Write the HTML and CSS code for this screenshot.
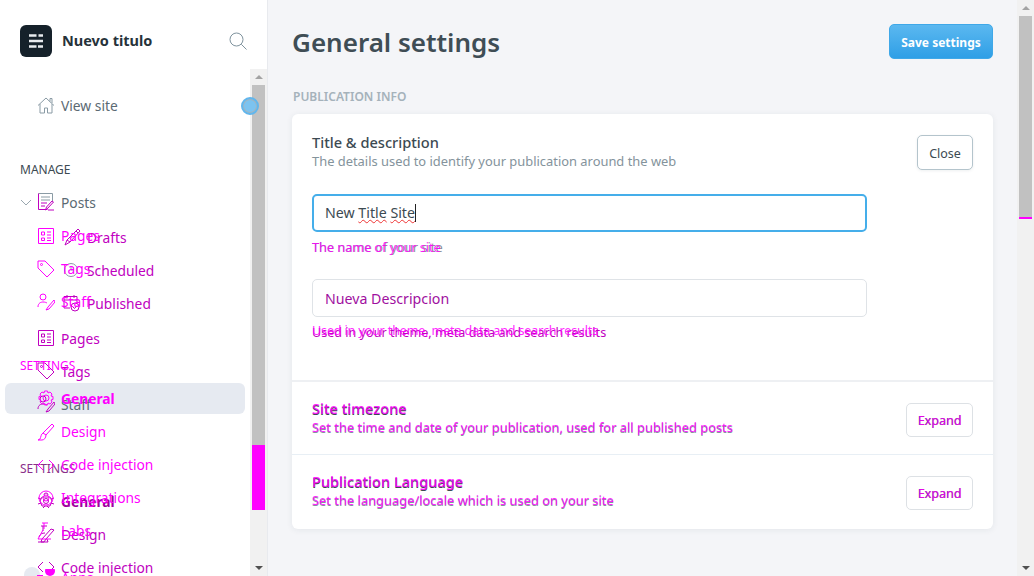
FILE: index.html
```html
<!doctype html>
<html lang="en">
<head>
<title>General settings</title>
<link rel="stylesheet" href="styles.css">
</head>
<body>
<div class="app">
  <aside class="sidebar">
    <div class="brand">
      <div class="logo">
        <svg width="14" height="14" viewBox="0 0 14 14"><path d="M0 1.500h7.500M9.500 1.500H14M0 7h14M0 12.500h7.500M9 12.500h5" stroke="#e8ebee" stroke-width="2.400" fill="none"/></svg>
      </div>
      <span class="brand-name">Nuevo titulo</span>
      <svg class="search" width="18" height="18" viewBox="0 0 18 18" fill="none" stroke="#7f939e" stroke-width="1"><circle cx="7.500" cy="7.500" r="6.500"/><path d="M12.300 12.300l5.200 5.200"/></svg>
    </div>
    <div class="nav-wrap">
      <nav class="nav">
        <a class="item view"><svg class="ico" viewBox="0 0 18 18"><path d="M1 9.500L9 2l8 7.500M13 5.500V2.500h2V7M3 8v9h4.500v-5h3v5H15V8"/></svg>View site</a>
        <div class="heading manage">MANAGE</div>
        <a class="item posts"><svg class="chev" width="12" height="7" viewBox="0 0 12 7"><path d="M1 1l5 5 5-5" fill="none" stroke="#9aa7af"/></svg><svg class="ico" viewBox="0 0 18 18"><path d="M1.500 .5h14v8M4 4h9M4 7h9"/><path class="hot-line" d="M1.500 .5v16h9M4 10h6M4 13h4M16.500 9l-5.500 6-2.500 2 1-3 5.500-6zM11 17h6"/></svg>Posts</a>
        <a class="sub"><svg class="ico hot" viewBox="0 0 18 18"><path d="M15 1l2 2-10 11-5 3 2-5zM4 12l3 2M13 3l2 2"/></svg>Drafts</a>
        <a class="sub"><svg class="ico" viewBox="0 0 18 18"><circle cx="8" cy="9" r="6.500"/><path d="M8 5v4h3"/></svg>Scheduled</a>
        <a class="sub"><svg class="ico hot" viewBox="0 0 18 18"><path d="M1 2.500h13v6M1 2.500V14h6M1 6h13M4 1v3M11 1v3"/><circle cx="12" cy="13" r="4"/><path d="M10 13l1.500 1.500 2.500-3"/></svg>Published</a>
        <a class="item low"><svg class="ico hot" viewBox="0 0 18 18"><path d="M1.500 1.500h15v15h-15zM4.500 5h3v3h-3zM4.500 11h3v2.500h-3zM10 5h4M10 8h4M10 11h4M10 13.500h4"/></svg>Pages</a>
        <a class="item low"><svg class="ico hot" viewBox="0 0 18 18"><path d="M1 1h7l9 9-7 7-9-9z"/><circle cx="4.500" cy="4.500" r="1"/></svg>Tags</a>
        <a class="item low staff"><svg class="ico hot" viewBox="0 0 18 18"><circle cx="6" cy="4" r="3"/><path d="M1 14c0-4 3-5 5-5s3 .5 4 1M17 7l-6 7-2 3 3-1 6-7z"/></svg>Staff</a>
        <div class="heading second">SETTINGS</div>
        <a class="item low"><svg class="ico hot" viewBox="0 0 18 18"><path d="M7 3a2 2 0 0 1 4 0M5 5h8l2 4-2 5H5L3 9zM1 6l3 1M17 6l-3 1M1 12l3-1M17 12l-3-1M6 16l2-2M12 16l-2-2"/><circle cx="9" cy="9" r="2.500"/></svg><b>General</b></a>
        <a class="item low"><svg class="ico hot" viewBox="0 0 18 18"><path d="M4 1h6M6 1v5M1 17h10l-1-3M17 5l-8 9-2 3-3 0 1-3 9-10zM2 12c1-3 3-4 6-4"/></svg>Design</a>
        <a class="item low"><svg class="ico hot" viewBox="0 0 18 18"><path d="M6 4L1 9l5 5M12 4l5 5-5 5"/></svg>Code injection</a>
      </nav>
      <div class="ghost-nav">
        <a class="ghost-item"><svg class="ico" viewBox="0 0 18 18"><path d="M1.500 1.500h15v15h-15zM4.500 5h3v3h-3zM4.500 11h3v2.500h-3zM10 5h4M10 8h4M10 11h4M10 13.500h4"/></svg>Pages</a>
        <a class="ghost-item"><svg class="ico" viewBox="0 0 18 18"><path d="M1 1h7l9 9-7 7-9-9z"/><circle cx="4.500" cy="4.500" r="1"/></svg>Tags</a>
        <a class="ghost-item"><svg class="ico" viewBox="0 0 18 18"><circle cx="6" cy="4" r="3"/><path d="M1 14c0-4 3-5 5-5s3 .5 4 1M17 7l-6 7-2 3 3-1 6-7z"/></svg>Staff</a>
        <div class="ghost-heading">SETTINGS</div>
        <a class="ghost-item active"><svg class="ico" viewBox="0 0 18 18"><path d="M7.500 1h3l.5 2 2-1 2 2-1 2 2 .5v3l-2 .5 1 2-2 2-2-1-.5 2h-3l-.5-2-2 1-2-2 1-2-2-.5v-3l2-.5-1-2 2-2 2 1z"/><circle cx="9" cy="8" r="3"/></svg><b>General</b></a>
        <a class="ghost-item"><svg class="ico" viewBox="0 0 18 18"><path d="M15 1l2 2-8 9-3-2zM6 10c-2 1-2 4-3 6l-2 1h4c2 0 4-2 4-5"/></svg>Design</a>
        <a class="ghost-item"><svg class="ico" viewBox="0 0 18 18"><path d="M6 4L1 9l5 5M12 4l5 5-5 5"/></svg>Code injection</a>
        <a class="ghost-item"><svg class="ico" viewBox="0 0 18 18"><circle cx="9" cy="9" r="7"/><circle cx="9" cy="9" r="3"/></svg>Integrations</a>
        <a class="ghost-item"><svg class="ico" viewBox="0 0 18 18"><path d="M5 1h6M7 1v6M1 17l5-9M14 17H1"/></svg>Labs</a>
        <a class="ghost-item apps"><span class="fan"></span><svg class="ico blob" viewBox="0 0 18 18"><circle cx="13" cy="2" r="5"/><rect x="0" y="6" width="6" height="1.500"/></svg>Apps</a>
      </div>
      <div class="side-track">
        <div class="arrow up"></div>
        <div class="thumb"></div>
        <div class="thumb-pink"></div>
        <div class="arrow down"></div>
      </div>
      <div class="pulse"></div>
    </div>
  </aside>

  <main class="main">
    <header class="top">
      <h1>General settings</h1>
      <button class="save">Save settings</button>
    </header>
    <div class="section-title">PUBLICATION INFO</div>
    <section class="card">
      <div class="block">
        <div class="row-head">
          <div>
            <div class="row-title">Title &amp; description</div>
            <div class="row-desc">The details used to identify your publication around the web</div>
          </div>
          <button class="btn">Close</button>
        </div>
        <div class="field focus"><span class="typed">New <span class="misspelt">Title</span> <span class="misspelt">Site</span></span></div>
        <div class="hint dbl"><span>The name of your site</span><span class="ghost g-name">The name of your site</span></div>
        <div class="field second-field">Nueva Descripcion</div>
        <div class="hint hint-used dbl"><span>Used in your theme, meta data and search results</span><span class="ghost g-used">Used in your theme, meta data and search results</span></div>
      </div>
      <div class="row">
        <div>
          <div class="row-title dbl"><span>Site timezone</span><span class="ghost">Site timezone</span></div>
          <div class="row-desc dbl"><span>Set the time and date of your publication, used for all published posts</span><span class="ghost">Set the time and date of your publication, used for all published posts</span></div>
        </div>
        <button class="btn faded dbl"><span>Expand</span><span class="ghost">Expand</span></button>
      </div>
      <div class="row">
        <div>
          <div class="row-title dbl"><span>Publication Language</span><span class="ghost">Publication Language</span></div>
          <div class="row-desc dbl"><span>Set the language/locale which is used on your site</span><span class="ghost">Set the language/locale which is used on your site</span></div>
        </div>
        <button class="btn faded dbl"><span>Expand</span><span class="ghost">Expand</span></button>
      </div>
    </section>
    <div class="section-title pink">PUBLICATION IDENTITY</div>
  </main>

  <div class="page-track">
    <div class="arrow up"></div>
    <div class="page-thumb"></div>
    <div class="page-rest"></div>
    <div class="arrow down"></div>
  </div>
</div>
</body>
</html>
```

FILE: styles.css
```css
html, body {
  margin: 0;
  height: 100%;
  overflow: hidden;
}

body {
  font-family: "Noto Sans", "Open Sans", sans-serif;
  font-size: 14px;
  color: #3c4a52;
}

.app {
  display: flex;
  height: 576px;
}

/* sidebar */
.sidebar {
  width: 267px;
  flex: none;
  background: #fff;
  border-right: 1px solid #e8eaee;
  display: flex;
  flex-direction: column;
  overflow: hidden;
}

.brand {
  height: 69px;
  flex: none;
  display: flex;
  align-items: center;
  padding: 13px 20px 0;
  box-sizing: border-box;
}

.logo {
  width: 32px;
  height: 32px;
  border-radius: 6px;
  background: #15212a;
  display: flex;
  align-items: center;
  justify-content: center;
  flex: none;
}

.brand-name {
  margin: 0 0 2px 10px;
  font-size: 14.500px;
  font-weight: 700;
  color: #26323a;
  flex: 1;
}

.nav-wrap {
  position: relative;
  flex: 1;
  min-height: 0;
  font-size: 13.800px;
}

.nav {
  position: relative;
  padding-top: 27px;
}

.item {
  display: flex;
  align-items: center;
  height: 18px;
  padding-left: 37px;
  color: #5b6a73;
  position: relative;
}

.ico {
  width: 18px;
  height: 18px;
  margin-right: 6px;
  flex: none;
  fill: none;
  stroke: #8a9ba5;
  stroke-width: 1;
}

.ico.hot {
  stroke: #c000c0;
}

.hot-line {
  stroke: #c000c0;
}

.chev {
  position: absolute;
  left: 20px;
  top: 6px;
}

.heading {
  font-size: 12px;
  padding-left: 20px;
  color: #3c4a52;
  line-height: 16px;
}

.manage {
  margin-top: 48px;
  margin-bottom: 15px;
}

.sub {
  display: flex;
  align-items: center;
  height: 18px;
  margin-top: 15px;
  padding-left: 63px;
  color: #c000c0;
}

.low {
  color: #c000c0;
  margin-top: 15px;
}

.low b {
  color: #a000a0;
}

.posts + .sub {
  margin-top: 17px;
}

.sub + .low {
  margin-top: 17px;
}

.staff {
  color: #5b6a73;
}

.second {
  color: #8a2f8a;
  margin-top: 48px;
  margin-bottom: 15px;
}

/* the second, shifted copy of the menu */
.ghost-nav {
  position: absolute;
  left: 0;
  top: 150px;
  width: 250px;
}

.ghost-item {
  display: flex;
  align-items: center;
  height: 33px;
  padding-left: 37px;
  color: #f0f;
  box-sizing: border-box;
  position: relative;
}

.ghost-item .ico {
  stroke: #f0f;
}

.ghost-item b {
  font-weight: 700;
}

.ghost-heading {
  color: #f0f;
  font-size: 12px;
  padding-left: 20px;
  margin-top: 39px;
  height: 18px;
}

.active {
  margin: 8px 5px 1px;
  padding-left: 32px;
  height: 31px;
  border-radius: 6px;
}

.apps {
  margin-top: 14px;
}

.ghost-item .blob {
  fill: #f0f;
  stroke: none;
}

.fan {
  position: absolute;
  left: 24px;
  top: 6px;
  width: 16px;
  height: 16px;
  border-radius: 50%;
  background: #e6eaf1;
}

.blob {
  position: relative;
}

.nav-wrap::before {
  content: "";
  position: absolute;
  left: 5px;
  top: 314px;
  width: 240px;
  height: 31px;
  border-radius: 6px;
  background: #e6eaf1;
}

.side-track {
  position: absolute;
  left: 250px;
  top: 0;
  bottom: 0;
  width: 17px;
  background: #f1f1f1;
  display: flex;
  flex-direction: column;
}

.thumb {
  height: 360px;
  margin: 0 2px;
  background: #c1c1c1;
}

.thumb-pink {
  height: 65px;
  margin: 0 2px;
  background: #f0f;
}

.arrow {
  height: 16px;
  flex: none;
  display: flex;
  align-items: center;
  justify-content: center;
}

.arrow::after {
  content: "";
  border-left: 4px solid transparent;
  border-right: 4px solid transparent;
}

.arrow.up::after {
  border-bottom: 4px solid #a3a3a3;
}

.arrow.down {
  margin-top: auto;
}

.arrow.down::after {
  border-top: 4px solid #505050;
}

.pulse {
  position: absolute;
  left: 241px;
  top: 28px;
  width: 14px;
  height: 14px;
  border: 2px solid #62b6ec;
  border-radius: 50%;
  background: #7cc3f0;
  box-shadow: inset 0 0 0 1px #a4b4bd;
}

/* main column */
.main {
  flex: 1;
  min-width: 0;
  background: #f4f5f8;
  padding: 0 24px;
  overflow: hidden;
}

.top {
  display: flex;
  align-items: center;
  justify-content: space-between;
  height: 83px;
}

h1 {
  margin: 0;
  font-size: 26px;
  font-weight: 600;
  color: #3f4d55;
}

.save {
  width: 104px;
  height: 35px;
  border: 1px solid #3fa8e8;
  border-radius: 5px;
  background: linear-gradient(#5bb8f0, #2f9fe6);
  color: #fff;
  font: 700 12px "Noto Sans", sans-serif;
  padding: 1px 0 0;
}

.section-title {
  font-size: 12px;
  font-weight: 600;
  color: #a5b2bb;
  line-height: 16px;
  margin: 6px 0 9px 1px;
}

.section-title.pink {
  color: #f0f;
  margin-top: 44px;
  font-weight: 400;
}

.card {
  background: #fff;
  border-radius: 6px;
  box-shadow: 0 1px 6px rgba(40, 60, 80, .08);
}

.block {
  padding: 20px 20px 38px;
  border-bottom: 2px solid #eef0f3;
}

.row-head {
  display: flex;
  justify-content: space-between;
  align-items: flex-start;
}

.row-title {
  font-size: 14.600px;
  font-weight: 500;
  line-height: 16px;
  padding-bottom: 2px;
  color: #3c4a52;
}

.row-desc {
  font-size: 12.900px;
  line-height: 18px;
  color: #84939c;
}

.btn {
  position: relative;
  width: 56px;
  height: 35px;
  border: 1px solid #b4c4cc;
  border-radius: 5px;
  background: #fff;
  color: #3c4a52;
  font: 12.500px "Noto Sans", sans-serif;
  padding: 1px 0 0;
  margin-top: 1px;
  box-shadow: 0 1px 3px rgba(40, 60, 80, .08);
}

.field {
  width: 555px;
  height: 38px;
  box-sizing: border-box;
  margin-top: 24px;
  border: 1px solid #dfe3e7;
  border-radius: 5px;
  padding-left: 12px;
  display: flex;
  align-items: center;
  font-size: 14.200px;
  color: #3c4a52;
}

.field.focus {
  border: 2px solid #45aeea;
  padding-left: 11px;
}

.typed {
  border-right: 1px solid #222;
  line-height: 18px;
}

.misspelt {
  text-decoration: underline wavy #e33 1px;
  text-underline-offset: 1px;
}

.second-field {
  margin-top: 23px;
  color: #a010a0;
}

.hint {
  font-size: 12.800px;
  line-height: 18px;
  color: #84939c;
  margin-top: 6px;
}

.hint-used {
  color: #c000c0;
  font-size: 12.600px;
  margin-top: 7px;
}

.row {
  display: flex;
  justify-content: space-between;
  align-items: center;
  height: 73px;
  padding: 2px 20px 0;
  box-sizing: border-box;
  border-bottom: 1px solid #e8eff5;
}

.row:last-child {
  border-bottom: 0;
  height: 74px;
  padding-top: 0;
}

.btn.faded {
  width: 67px;
  height: 34px;
  border-color: #dde1e5;
  box-shadow: none;
  margin: 2px 0 0;
}

/* magenta copy of a text, laid over the grey one */
.dbl {
  position: relative;
}

.ghost {
  position: absolute;
  left: 0;
  top: -1px;
  color: #f0f;
  white-space: nowrap;
  opacity: .85;
}

.btn .ghost {
  left: 11px;
  top: 8px;
}

.g-name {
  letter-spacing: -.1px;
  top: 0;
}

.g-used {
  top: -2px;
  letter-spacing: -.17px;
}

/* window scrollbar */
.page-track {
  width: 17px;
  flex: none;
  background: #f1f1f1;
  display: flex;
  flex-direction: column;
}

.page-thumb {
  height: 201px;
  margin: 0 2px;
  background: #c1c1c1;
  border-bottom: 2px solid #f0f;
}

.page-rest {
  flex: 1;
}

.page-track .arrow.down {
  margin-top: 0;
}
```
